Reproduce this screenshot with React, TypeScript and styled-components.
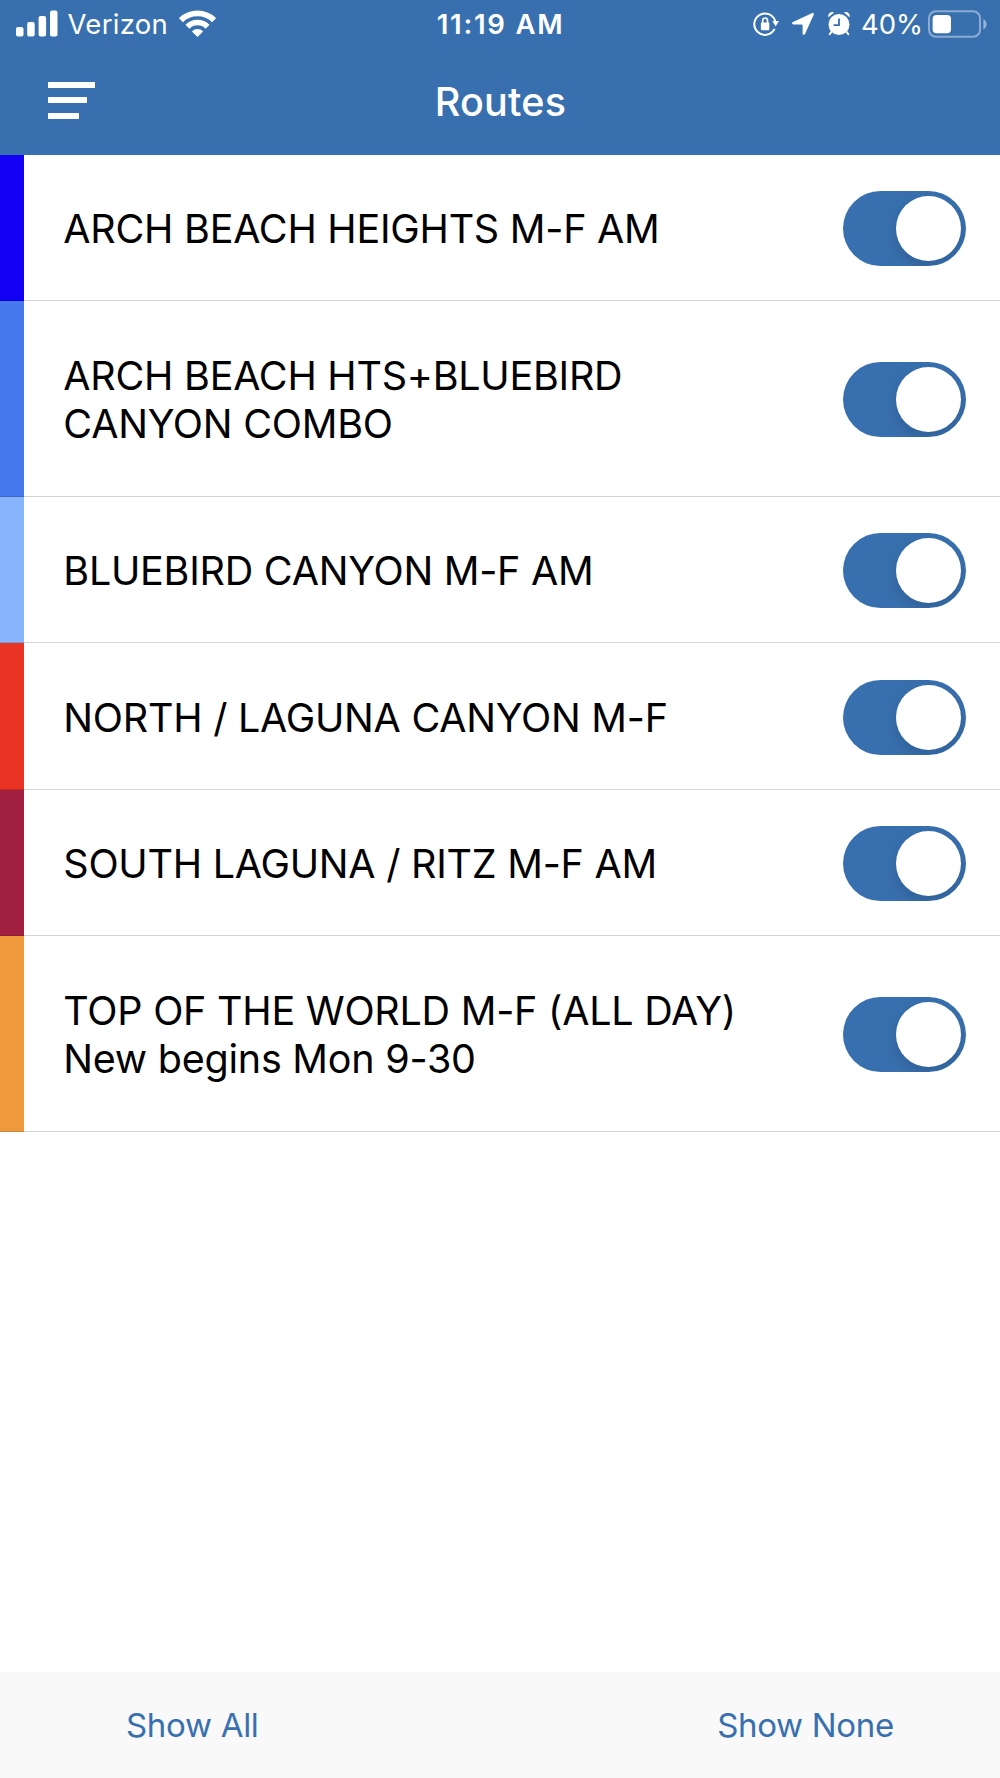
import React, { useState } from "react";
import styled, { createGlobalStyle } from "styled-components";

const brand = "#3870af";

const GlobalStyle = createGlobalStyle`
  *, *::before, *::after { box-sizing: border-box; }
  body { margin: 0; background: #fff; }
  button { font: inherit; border: 0; padding: 0; background: none; cursor: pointer; }
  svg { display: block; flex: none; }
`;

const Screen = styled.div`
  display: flex;
  flex-direction: column;
  width: 1000px;
  height: 1778px;
  overflow: hidden;
  background: #fff;
  color: #000;
  font-family: Inter, "Liberation Sans", sans-serif;
`;

const Header = styled.header`
  flex: none;
  height: 154.8px;
  background: ${brand};
  color: #fff;
`;

const StatusBar = styled.div`
  display: grid;
  grid-template-columns: 1fr auto 1fr;
  align-items: center;
  height: 47px;
  padding: 0 13px 0 16px;
  font-size: 27.5px;
  line-height: 34px;
`;

const StatusGroup = styled.div<{ $end?: boolean }>`
  display: flex;
  align-items: center;
  justify-content: ${(p) => (p.$end ? "flex-end" : "flex-start")};
`;

const Carrier = styled.span`
  margin: 0 11.2px 0 9.5px;
  padding-top: 1px;
  letter-spacing: 0.28px;
`;

const Clock = styled.time`
  margin-right: 2px;
  padding-top: 1px;
  font-weight: 600;
  letter-spacing: 1.75px;
`;

const Percent = styled.span`
  margin: 0 5px 0 10px;
  padding-top: 1px;
`;

const TitleBar = styled.div`
  display: grid;
  grid-template-columns: 1fr auto 1fr;
  align-items: center;
  height: 107px;
  padding: 0 48px;
`;

const MenuButton = styled.button`
  display: flex;
  flex-direction: column;
  gap: 9.5px;
  width: 46.5px;
  margin-top: -1px;
`;

const MenuLine = styled.span<{ $width: number }>`
  width: ${(p) => p.$width}px;
  height: 6px;
  background: #fff;
`;

const Title = styled.h1`
  margin: 2px 0 0 1px;
  font-size: 39.5px;
  line-height: 48px;
  font-weight: 500;
  letter-spacing: 0.25px;
`;

const RouteList = styled.ul`
  flex: 1;
  margin: 0;
  padding: 0;
  list-style: none;
`;

const Route = styled.li<{ $tall: boolean }>`
  display: flex;
  height: ${(p) => (p.$tall ? 195.5 : 146.5)}px;
`;

const Swatch = styled.span<{ $color: string }>`
  flex: none;
  width: 24px;
  background: ${(p) => p.$color};
  box-shadow: inset 0 -1px rgba(0, 0, 0, 0.14);
`;

const RouteBody = styled.div`
  flex: 1;
  display: flex;
  align-items: center;
  justify-content: space-between;
  padding: 1px 34px 0 39.3px;
  box-shadow: inset 0 -1px #d3d3d3;
`;

const RouteName = styled.span`
  padding-top: 1.5px;
  font-size: 39.5px;
  line-height: 48.4px;
  letter-spacing: -0.25px;
  white-space: pre-line;
`;

const Switch = styled.button<{ $on: boolean }>`
  display: flex;
  align-items: center;
  justify-content: ${(p) => (p.$on ? "flex-end" : "flex-start")};
  width: 123px;
  height: 75px;
  padding: 0 5px;
  border-radius: 38px;
  overflow: hidden;
  background: ${(p) => (p.$on ? brand : "#e5e5ea")};
`;

const Knob = styled.span`
  width: 65px;
  height: 65px;
  border-radius: 50%;
  background: #fff;
  box-shadow: 0 6px 16px rgba(0, 0, 0, 0.15);
`;

const Footer = styled.footer`
  flex: none;
  display: flex;
  align-items: center;
  justify-content: space-between;
  height: 106px;
  padding: 0 106px 0 126px;
  background: #f9f9f9;
`;

const FooterButton = styled.button`
  color: ${brand};
  font-size: 33px;
  line-height: 40px;
  letter-spacing: -0.3px;
`;

const SignalIcon = () => (
  <svg width="42" height="27" viewBox="0 0 42 27" fill="#fff">
    <rect x="0" y="17" width="7.5" height="9.5" rx="2" />
    <rect x="11.2" y="12" width="7.5" height="14.5" rx="2" />
    <rect x="22.6" y="6" width="7.5" height="20.5" rx="2" />
    <rect x="34" y="0.5" width="7.5" height="26" rx="2" />
  </svg>
);

const WifiIcon = () => (
  <svg width="37" height="27" viewBox="0 0 37 27" fill="none" stroke="#fff">
    <path d="M1.9 10.1A23.7 23.7 0 0 1 35.1 10.1" strokeWidth="5.7" />
    <path d="M8.4 16.7A14.4 14.4 0 0 1 28.6 16.7" strokeWidth="5.5" />
    <path d="M18.5 27 12.9 21.4A8 8 0 0 1 24.1 21.4Z" fill="#fff" stroke="none" />
  </svg>
);

const RotationLockIcon = () => (
  <svg width="26" height="26" viewBox="0 0 26 26" fill="none" stroke="#fff" strokeWidth="2">
    <path d="M21.2 18.6A10.7 10.7 0 1 1 22.2 10" strokeLinecap="round" />
    <path d="M19.3 10H26L22.6 15.4Z" fill="#fff" stroke="none" />
    <rect x="7.9" y="11.4" width="8.4" height="7.8" rx="1" fill="#fff" stroke="none" />
    <path d="M9.7 12V9.4a2.4 2.4 0 0 1 4.8 0V12" strokeWidth="1.7" />
  </svg>
);

const LocationIcon = () => (
  <svg width="24" height="24" viewBox="0 0 24 24" fill="#fff">
    <path d="M21.4 1.1C22.4.7 23.2 1.5 22.8 2.5L14 22c-.6 1.3-2.4 1-2.4-.4V13.1c0-.5-.2-.7-.7-.7H2.3C.8 12.4.6 10.6 1.9 10Z" />
  </svg>
);

const AlarmIcon = () => (
  <svg width="24" height="26" viewBox="0 0 24 26" fill="#fff">
    <path d="m5 20-2.3 3.3M19 20l2.3 3.3" stroke="#fff" strokeWidth="2" strokeLinecap="round" />
    <circle cx="12" cy="13.5" r="10.5" />
    <path d="M1.5 6.2C.2 3.5 3.5-.2 7 1.5ZM22.5 6.2C23.8 3.5 20.5-.2 17 1.5Z" />
    <path d="M12 7.5v6.7H6.6" fill="none" stroke={brand} strokeWidth="1.8" />
  </svg>
);

const BatteryIcon = () => (
  <svg width="59" height="28" viewBox="0 0 59 28">
    <rect x="1" y="1.2" width="51" height="25.6" rx="7" fill="none" stroke="#fff" strokeOpacity=".42" strokeWidth="2" />
    <rect x="4.6" y="5" width="18.4" height="18.2" rx="4" fill="#fff" />
    <path d="M55.4 9.2c4.2 1.7 4.2 8.3 0 10Z" fill="#fff" fillOpacity=".48" />
  </svg>
);

const IconRow = styled.div`
  display: flex;
  align-items: center;
  gap: 12px;
  padding-top: 1px;
`;

const routes = [
  { name: "ARCH BEACH HEIGHTS M-F AM", color: "#1200f5" },
  { name: "ARCH BEACH HTS+BLUEBIRD\nCANYON COMBO", color: "#4679ee" },
  { name: "BLUEBIRD CANYON M-F AM", color: "#87b4fa" },
  { name: "NORTH / LAGUNA CANYON M-F", color: "#e93423" },
  { name: "SOUTH LAGUNA / RITZ M-F AM", color: "#a2203f" },
  { name: "TOP OF THE WORLD M-F (ALL DAY)\nNew begins Mon 9-30", color: "#f09a3e" },
];

export default function App() {
  const [visible, setVisible] = useState(() => routes.map(() => true));
  const setAll = (on: boolean) => setVisible(routes.map(() => on));
  const toggle = (index: number) =>
    setVisible((v) => v.map((on, i) => (i === index ? !on : on)));

  return (
    <Screen>
      <GlobalStyle />
      <Header>
        <StatusBar>
          <StatusGroup>
            <SignalIcon />
            <Carrier>Verizon</Carrier>
            <WifiIcon />
          </StatusGroup>
          <Clock>11:19 AM</Clock>
          <StatusGroup $end>
            <IconRow>
              <RotationLockIcon />
              <LocationIcon />
              <AlarmIcon />
            </IconRow>
            <Percent>40%</Percent>
            <BatteryIcon />
          </StatusGroup>
        </StatusBar>
        <TitleBar>
          <MenuButton aria-label="Menu">
            <MenuLine $width={46.5} />
            <MenuLine $width={38.7} />
            <MenuLine $width={31} />
          </MenuButton>
          <Title>Routes</Title>
        </TitleBar>
      </Header>
      <RouteList>
        {routes.map((route, i) => (
          <Route key={route.name} $tall={route.name.includes("\n")}>
            <Swatch $color={route.color} />
            <RouteBody>
              <RouteName>{route.name}</RouteName>
              <Switch
                role="switch"
                aria-checked={visible[i]}
                $on={visible[i]}
                onClick={() => toggle(i)}
              >
                <Knob />
              </Switch>
            </RouteBody>
          </Route>
        ))}
      </RouteList>
      <Footer>
        <FooterButton onClick={() => setAll(true)}>Show All</FooterButton>
        <FooterButton onClick={() => setAll(false)}>Show None</FooterButton>
      </Footer>
    </Screen>
  );
}
